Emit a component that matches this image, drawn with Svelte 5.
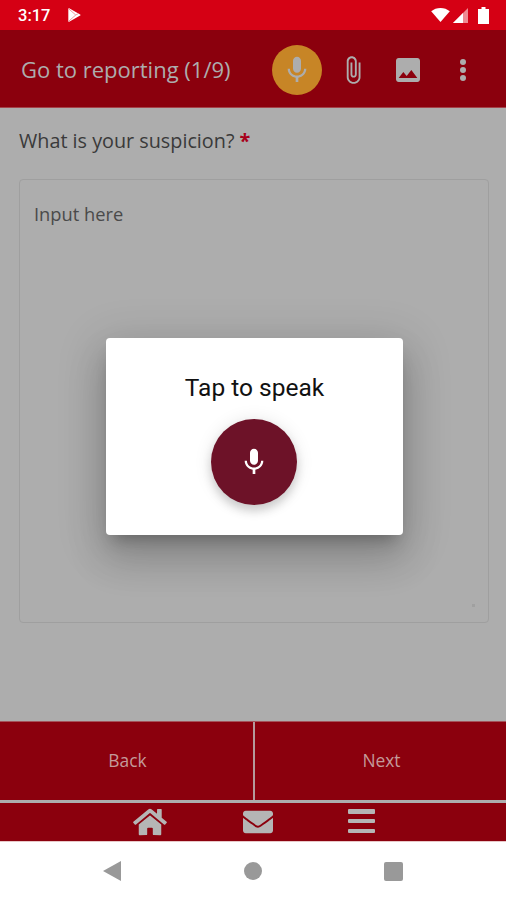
<script>
  const micPath = 'M12 14c1.66 0 2.99-1.34 2.99-3L15 5c0-1.66-1.34-3-3-3S9 3.34 9 5v6c0 1.66 1.34 3 3 3zm5.3-3c0 3-2.54 5.1-5.3 5.1S6.7 14 6.7 11H5c0 3.41 2.72 6.23 6 6.72V21h2v-3.28c3.28-.48 6-3.3 6-6.72h-1.7z';
</script>

<div class="phone">
  <div class="status">
    <span class="time">3:17</span>
    <svg class="play" viewBox="0 0 16 16">
      <path d="M1.500 1c0-.6.5-.9 1-.6l12.500 6.900c.6.3.6 1.100 0 1.400L2.500 15.600c-.5.3-1-.1-1-.6z" />
      <path d="M2 1l8 7-8 7M10 8l3-1.600" fill="none" stroke="#e8818a" stroke-width=".9" />
    </svg>
    <div class="status-right">
      <svg class="wifi" viewBox="0 0 20 15"><path d="M0 3.500C2.800 1.300 6.200 0 10 0s7.200 1.300 10 3.500L10 15z" /></svg>
      <svg class="signal" viewBox="0 0 15 15"><path d="M15 0v15H0z" fill="#ee8a92" /><path d="M10 5v10H0z" /></svg>
      <svg class="battery" viewBox="0 0 11 17"><path d="M3.500 0h4v2H11v15H0V2h3.500z" /></svg>
    </div>
  </div>

  <header class="appbar">
    <h1>Go to reporting (1/9)</h1>
    <div class="actions">
      <div class="mic-on">
        <svg viewBox="0 0 24 24"><path d={micPath} /></svg>
      </div>
      <svg class="clip" viewBox="0 0 24 24"><path d="M16.500 6v11.500c0 2.210-1.790 4-4 4s-4-1.790-4-4V5c0-1.380 1.120-2.500 2.500-2.500s2.500 1.120 2.500 2.500v10.500c0 .55-.45 1-1 1s-1-.45-1-1V6H10v9.500c0 1.380 1.120 2.500 2.500 2.500s2.500-1.120 2.500-2.500V5c0-2.210-1.790-4-4-4S7 2.790 7 5v12.500c0 3.040 2.460 5.500 5.500 5.500s5.500-2.460 5.500-5.500V6h-1.500z" /></svg>
      <svg class="pic" viewBox="0 0 24 24"><path d="M21 19V5c0-1.100-.9-2-2-2H5c-1.100 0-2 .9-2 2v14c0 1.100.9 2 2 2h14c1.100 0 2-.9 2-2zM8.500 13.500l2.500 3.010L14.500 12l4.500 6H5l3.500-4.500z" /></svg>
      <svg class="more" viewBox="0 0 8 24"><circle cx="4" cy="4" r="3" /><circle cx="4" cy="12" r="3" /><circle cx="4" cy="20" r="3" /></svg>
    </div>
  </header>

  <main class="content">
    <p class="question">What is your suspicion? <span class="req">*</span></p>
    <div class="input-box">
      <span class="placeholder">Input here</span>
      <i class="grip"></i>
    </div>
  </main>

  <div class="buttons">
    <div class="btn">Back</div>
    <div class="btn">Next</div>
  </div>

  <nav class="tabs">
    <svg class="home" viewBox="0 0 576 512"><path d="M280.370 148.260L96 300.110V464a16 16 0 0 0 16 16l112.060-.29a16 16 0 0 0 15.920-16V368a16 16 0 0 1 16-16h64a16 16 0 0 1 16 16v95.640a16 16 0 0 0 16 16.050L464 480a16 16 0 0 0 16-16V300L295.670 148.260a12.190 12.190 0 0 0-15.300 0zM571.600 251.470L488 182.560V44.050a12 12 0 0 0-12-12h-56a12 12 0 0 0-12 12v72.610L318.470 43a48 48 0 0 0-61 0L4.340 251.470a12 12 0 0 0-1.600 16.900l25.500 31A12 12 0 0 0 45.150 301l235.220-193.740a12.190 12.190 0 0 1 15.300 0L530.900 301a12 12 0 0 0 16.900-1.600l25.500-31a12 12 0 0 0-1.700-16.930z" /></svg>
    <svg class="mail" viewBox="0 0 512 512"><path d="M502.300 190.800c3.900-3.100 9.700-.2 9.700 4.700V400c0 26.500-21.500 48-48 48H48c-26.500 0-48-21.500-48-48V195.600c0-5 5.700-7.800 9.700-4.700 22.400 17.400 52.100 39.500 154.100 113.600 21.100 15.400 56.700 47.800 92.200 47.600 35.700.3 72-32.800 92.300-47.600 102-74.100 131.600-96.300 154-113.700zM256 320c23.200.4 56.600-29.200 73.400-41.400 132.700-96.300 142.800-104.700 173.400-128.700 5.800-4.500 9.200-11.500 9.200-18.900v-19c0-26.500-21.500-48-48-48H48C21.500 64 0 85.500 0 112v19c0 7.400 3.400 14.300 9.200 18.900 30.600 23.900 40.700 32.400 173.400 128.700 16.800 12.200 50.200 41.800 73.400 41.400z" /></svg>
    <div class="bars"><i></i><i></i><i></i></div>
  </nav>

  <div class="sysnav">
    <svg class="back" viewBox="0 0 18 20"><path d="M18 0v20L0 10z" /></svg>
    <div class="circle"></div>
    <div class="square"></div>
  </div>

  <div class="dialog">
    <div class="dialog-title">Tap to speak</div>
    <div class="fab">
      <svg viewBox="0 0 24 24"><path d={micPath} /></svg>
    </div>
  </div>
</div>

<style>
  :global(body) {
    margin: 0;
  }

  .phone {
    position: relative;
    width: 506px;
    height: 900px;
    display: flex;
    flex-direction: column;
    overflow: hidden;
    background: #adadad;
    font-family: "Open Sans", sans-serif;
  }

  .status {
    height: 30px;
    flex: none;
    display: flex;
    align-items: center;
    padding: 0 17px 0 18px;
    background: #d50014;
    color: #fff;
    box-sizing: border-box;
  }

  .time {
    font-family: Roboto, sans-serif;
    font-weight: 500;
    font-size: 16.500px;
  }

  .play {
    width: 14px;
    height: 14px;
    margin-left: 17px;
    fill: #fff;
  }

  .status-right {
    margin-left: auto;
    display: flex;
    align-items: center;
    gap: 9px;
    fill: #fff;
  }

  .wifi {
    width: 19px;
    height: 14px;
    margin-right: -6px;
  }

  .signal {
    width: 15px;
    height: 15px;
  }

  .battery {
    width: 11px;
    height: 17px;
    margin-left: 1px;
  }

  .appbar {
    height: 78px;
    flex: none;
    display: flex;
    align-items: center;
    padding-left: 21px;
    background: #8b000d;
    color: #adadad;
    box-sizing: border-box;
    border-bottom: 1px solid #a5434a;
  }

  h1 {
    margin: 0;
    font-size: 22px;
    font-weight: 400;
  }

  .actions {
    margin-left: auto;
    padding-top: 3px;
    display: flex;
    align-items: center;
    fill: #adadad;
  }

  .mic-on {
    width: 50px;
    height: 50px;
    border-radius: 50%;
    background: #c78526;
    display: flex;
    align-items: center;
    justify-content: center;
  }

  .mic-on svg {
    width: 32px;
    height: 32px;
  }

  .clip {
    width: 30px;
    height: 30px;
    margin-left: 16px;
  }

  .pic {
    width: 32px;
    height: 32px;
    margin-left: 24px;
  }

  .more {
    width: 8px;
    height: 24px;
    margin: 0 39px 0 35px;
  }

  .content {
    flex: 1;
    display: flex;
    flex-direction: column;
    padding: 20px 17px 98px 19px;
    color: #3a3a3a;
  }

  .question {
    margin: 0 0 26px;
    font-size: 19.800px;
    line-height: 25px;
  }

  .req {
    color: #a8001a;
    font-weight: 700;
  }

  .input-box {
    position: relative;
    flex: 1;
    padding: 21px 14px;
    border: 1.500px solid #9f9f9f;
    border-radius: 4px;
  }

  .placeholder {
    font-size: 18.300px;
    color: #4a4a4a;
  }

  .grip {
    position: absolute;
    right: 13px;
    bottom: 15px;
    width: 3px;
    height: 3px;
    background: #a0a0a0;
  }

  .buttons {
    height: 82px;
    flex: none;
    display: flex;
    box-sizing: border-box;
    background: #8b000d;
    border-top: 1px solid #a5535a;
    border-bottom: 3px solid #adadad;
  }

  .btn {
    flex: 1;
    display: flex;
    align-items: center;
    justify-content: center;
    box-sizing: border-box;
    padding: 0 0 3px 2px;
    color: #c49a9a;
    font-size: 17.400px;
  }

  .btn:first-child {
    flex: 0 0 255px;
    border-right: 2px solid #b59a9c;
  }

  .tabs {
    height: 38px;
    flex: none;
    display: flex;
    align-items: center;
    padding-left: 133px;
    background: #8b000d;
    box-sizing: border-box;
    fill: #b5b5b5;
  }

  .home {
    width: 34px;
    height: 30px;
  }

  .mail {
    width: 30px;
    height: 30px;
    margin-left: 76px;
  }

  .bars {
    width: 27px;
    height: 24px;
    margin: 0 0 2px 75px;
    display: flex;
    flex-direction: column;
    justify-content: space-between;
  }

  .bars i {
    height: 4.500px;
    border-radius: 1px;
    background: #b5b5b5;
  }

  .sysnav {
    height: 59px;
    flex: none;
    display: flex;
    align-items: center;
    padding-left: 103px;
    background: #fff;
    box-sizing: border-box;
    border-top: 1px solid #e8c8c8;
  }

  .back {
    width: 18px;
    height: 20px;
    fill: #999;
  }

  .circle {
    width: 18px;
    height: 18px;
    margin-left: 123px;
    border-radius: 50%;
    background: #999;
  }

  .square {
    width: 19px;
    height: 19px;
    margin-left: 122px;
    border-radius: 2px;
    background: #999;
  }

  .dialog {
    position: absolute;
    left: 106px;
    top: 338px;
    width: 297px;
    height: 197px;
    display: flex;
    flex-direction: column;
    align-items: center;
    background: #fff;
    border-radius: 4px;
    box-shadow: 0 24px 38px 3px rgba(0, 0, 0, .14), 0 9px 46px 8px rgba(0, 0, 0, .12), 0 11px 15px -7px rgba(0, 0, 0, .26);
  }

  .dialog-title {
    margin-top: 35px;
    font-family: Roboto, sans-serif;
    font-size: 24.500px;
    line-height: 30px;
    color: #111;
  }

  .fab {
    width: 86px;
    height: 86px;
    margin: 16px 2px 0 0;
    border-radius: 50%;
    background: #6d1228;
    display: flex;
    align-items: center;
    justify-content: center;
    fill: #fff;
    box-shadow: 0 6px 10px rgba(0, 0, 0, .16), 0 1px 18px rgba(0, 0, 0, .1);
  }

  .fab svg {
    width: 32px;
    height: 32px;
  }
</style>
